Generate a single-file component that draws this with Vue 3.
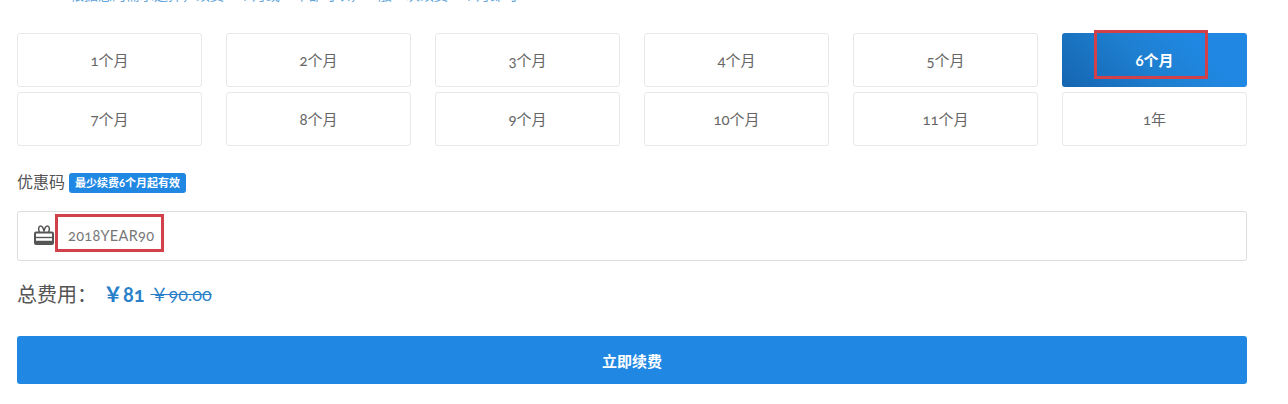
<script setup>
const months = ['1个月','2个月','3个月','4个月','5个月','6个月','7个月','8个月','9个月','10个月','11个月','1年']
</script>

<template>
  <main class="page">
    <p class="clipped">根据您的需求选择，续费一个月或一年都可以，一般一次续费一个月即可</p>
    <div class="grid">
      <div v-for="m in months" :key="m" class="cell" :class="{ active: m === '6个月' }">
        {{ m }}<i v-if="m === '6个月'" class="mark mark-month"></i>
      </div>
    </div>
    <div class="label-row">
      <span class="label">优惠码</span>
      <span class="badge">最少续费6个月起有效</span>
    </div>
    <div class="input">
      <svg class="gift" width="20" height="20" viewBox="0 0 20 20" fill="none" stroke="#555">
        <path d="M5.500 7C4 4.500 4.500 1 6.500 1 8.200 1 9.500 3.500 10 6.500 10.500 3.500 11.800 1 13.500 1 15.500 1 16 4.500 14.500 7" stroke-width="1.500" />
        <rect x="1" y="7.500" width="18" height="11.500" rx="1" stroke-width="2" />
        <path d="M1 12.500h18" stroke-width="1.400" />
        <path d="M1 17h18" stroke-width="2.500" />
      </svg>
      <span class="code">2018YEAR90</span>
      <i class="mark mark-code"></i>
    </div>
    <div class="total">
      <span class="total-label">总费用：</span>
      <span class="price">￥81</span>
      <s class="old">￥90.00</s>
    </div>
    <button class="submit" type="button">立即续费</button>
  </main>
</template>

<style scoped>
.page {
  width: 1288px;
  height: 404px;
  box-sizing: border-box;
  padding: 0 41px 0 17px;
  overflow: hidden;
  font-family: "Lato", "Noto Sans CJK SC", sans-serif;
  color: #555;
  font-variant-numeric: oldstyle-nums;
}
.clipped {
  margin: -13px 0 0;
  padding-left: 53px;
  height: 16px;
  font-size: 14px;
  line-height: 16px;
  color: #2a86d0;
  white-space: nowrap;
  opacity: 0.75;
}
.grid {
  margin-top: 30px;
  display: grid;
  grid-template-columns: repeat(6, 185px);
  grid-auto-rows: 54px;
  column-gap: 24px;
  row-gap: 5px;
}
.cell {
  position: relative;
  box-sizing: border-box;
  border: 1px solid #e8e8e8;
  border-radius: 3px;
  display: flex;
  align-items: center;
  justify-content: center;
  padding-bottom: 2px;
  font-size: 15px;
  color: #666;
}
.cell.active {
  border: 0;
  background: linear-gradient(45deg, #1565b0 0%, #1e7fd0 45%, #2088e3 75%);
  color: #fff;
  font-weight: 700;
}
.mark {
  position: absolute;
  border: 3px solid #d2414a;
  box-sizing: border-box;
}
.mark-month {
  left: 32px;
  top: -3px;
  width: 114px;
  height: 49px;
}
.label-row {
  margin-top: 25px;
  display: flex;
  align-items: center;
  gap: 4px;
  height: 20px;
}
.label { font-size: 16px; color: #555; }
.badge {
  background: #2088e3;
  color: #fff;
  font-size: 11px;
  font-weight: 700;
  line-height: 20px;
  padding: 0 6px;
  border-radius: 3px;
  margin-top: 4px;
}
.input {
  position: relative;
  margin-top: 20px;
  box-sizing: border-box;
  height: 50px;
  border: 1px solid #ddd;
  border-radius: 3px;
  display: flex;
  align-items: center;
  padding-left: 16px;
  gap: 14px;
}
.gift { flex: none; margin-top: -2px; }
.code {
  font-size: 14.500px;
  color: #777;
  letter-spacing: 0.300px;
  margin-top: -1px;
}
.mark-code {
  left: 37px;
  top: 2px;
  width: 109px;
  height: 38px;
}
.total {
  margin-top: 18px;
  height: 28px;
  display: flex;
  align-items: center;
}
.total-label { font-size: 20px; color: #555; width: 89px; }
.price { font-size: 20px; font-weight: 700; color: #2a7fc9; margin-left: -3px; }
.old { font-size: 18px; color: #2a7fc9; margin-left: 6px; }
.submit {
  display: block;
  width: 100%;
  margin-top: 29px;
  height: 48px;
  border: 0;
  border-radius: 3px;
  background: #2088e3;
  color: #fff;
  font: 700 15px "Lato", "Noto Sans CJK SC", sans-serif;
}
</style>
